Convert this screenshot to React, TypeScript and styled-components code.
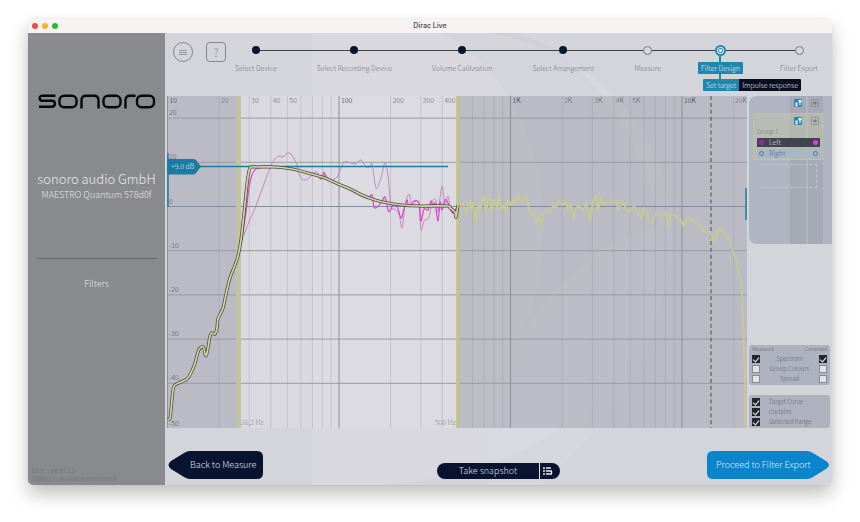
import React from 'react';
import styled, { createGlobalStyle, css } from 'styled-components';

const GlobalStyle = createGlobalStyle`
  * { box-sizing: border-box; }
  body {
    margin: 0;
    background: #fff;
    font-family: 'Noto Sans CJK SC', 'Open Sans', sans-serif;
    font-weight: 300;
  }
  button { font: inherit; border: 0; padding: 0; cursor: pointer; }
`;

type Point = [number, number];

const Page = styled.div`
  padding: 19px 28px 37px;
`;

const AppWindow = styled.div`
  border-radius: 5px;
  overflow: hidden;
  box-shadow: 0 9px 18px rgba(20, 20, 10, 0.27), 0 0 2px rgba(0, 0, 0, 0.1);
`;

const TitleBar = styled.header`
  display: grid;
  grid-template-columns: 1fr auto 1fr;
  align-items: center;
  height: 14px;
  padding: 0 4px;
  background: #f9f2f3;
`;

const Lights = styled.div`
  display: flex;
  gap: 4px;
`;

const Light = styled.span<{ $color: string }>`
  width: 6px;
  height: 6px;
  border-radius: 50%;
  background: ${(p) => p.$color};
`;

const Title = styled.h1`
  margin: 0;
  font: 600 7px/14px Inter, sans-serif;
  color: #5a5658;
`;

const Body = styled.div`
  display: grid;
  grid-template-columns: 137px minmax(0, 1fr);
`;

const Sidebar = styled.aside`
  display: flex;
  flex-direction: column;
  align-items: center;
  padding: 60px 4px 2px;
  background: #898a8d;
  color: #e6e6e9;
  text-align: center;
`;

const Logo = styled.svg`
  display: block;
  width: 118px;
  height: 17px;
`;

const Company = styled.h2`
  margin: 59px 0 0;
  font-size: 13px;
  line-height: 19px;
  font-weight: 300;
`;

const Product = styled.p`
  margin: 0;
  font-size: 9px;
  line-height: 14px;
`;

const Divider = styled.hr`
  width: 120px;
  margin: 56px 0 0;
  border: 0;
  border-top: 1px solid #66676b;
`;

const SidebarLink = styled.a`
  margin-top: 18px;
  font-size: 9px;
  line-height: 14px;
  color: inherit;
  text-decoration: none;
`;

const Version = styled.p`
  align-self: stretch;
  margin: auto 0 0;
  font-size: 6px;
  line-height: 8px;
  color: #6c6d70;
  text-align: left;
`;

const Main = styled.main`
  position: relative;
  display: flex;
  flex-direction: column;
  background: #d4d5db;
`;

const Backdrop = styled.svg`
  position: absolute;
  inset: 0;
  width: 100%;
  height: 100%;
`;

const Header = styled.div`
  position: relative;
  z-index: 1;
  display: flex;
  align-items: flex-start;
  height: 63px;
  padding: 9px 11px 0 8px;
`;

const ToolButtons = styled.div`
  display: flex;
  gap: 13px;
`;

const IconButton = styled.button<{ $round?: boolean }>`
  display: grid;
  place-items: center;
  width: 20px;
  height: 20px;
  border: 1px solid #85868c;
  border-radius: ${(p) => (p.$round ? '50%' : '4px')};
  background: transparent;
  color: #77787f;
  font-size: 11px;
  line-height: 18px;
  flex: none;
`;

const Steps = styled.ol`
  position: relative;
  display: flex;
  flex: 1;
  justify-content: space-between;
  margin: 0;
  padding: 4px 0 0 6px;
  list-style: none;
  &::before {
    content: '';
    position: absolute;
    top: 8px;
    left: 28px;
    right: 22px;
    height: 1px;
    background: #3c404a;
  }
`;

type StepState = 'done' | 'todo' | 'current';

const Step = styled.li`
  position: relative;
  display: flex;
  flex-direction: column;
  align-items: center;
`;

const Dot = styled.span<{ $state: StepState }>`
  width: 9px;
  height: 9px;
  border-radius: 50%;
  ${(p) =>
    p.$state === 'done' &&
    css`
      width: 8px;
      height: 8px;
      margin-bottom: 1px;
      background: #0b1628;
    `}
  ${(p) =>
    p.$state === 'todo' &&
    css`
      border: 1px solid #75777e;
      background: #d7d8dd;
    `}
  ${(p) =>
    p.$state === 'current' &&
    css`
      width: 11px;
      height: 11px;
      margin: -1px 0;
      border: 2px solid #1f86ae;
      background: radial-gradient(circle, #fff 1px, #1f86ae 2px, #e8f2f7 3px);
    `}
`;

const StepName = styled.button<{ $current?: boolean }>`
  margin-top: 7px;
  padding: 0 3px;
  border-radius: 1px;
  background: ${(p) => (p.$current ? '#1f86ae' : 'transparent')};
  color: ${(p) => (p.$current ? '#e8f3f8' : '#74757c')};
  font-size: 7px;
  line-height: 12px;
  white-space: nowrap;
`;

const Connector = styled.span`
  position: absolute;
  top: 10px;
  width: 2px;
  height: 24px;
  background: #1f86ae;
  z-index: -1;
`;

const SubMenu = styled.div`
  position: absolute;
  top: 33px;
  left: 5px;
  display: flex;
  border-radius: 1px;
  overflow: hidden;
`;

const SubItem = styled.button<{ $active?: boolean }>`
  padding: 0 3px;
  background: ${(p) => (p.$active ? '#1f86ae' : '#080e20')};
  color: #e3e8ee;
  font-size: 7px;
  line-height: 12px;
  white-space: nowrap;
`;

const Workspace = styled.div`
  position: relative;
  display: grid;
  grid-template-columns: minmax(0, 1fr) 83px;
  gap: 2px;
  padding-left: 2px;
`;

const Chart = styled.svg`
  display: block;
  width: 100%;
  height: auto;
`;

const Inspector = styled.div`
  display: flex;
  flex-direction: column;
`;

const Channels = styled.section`
  display: flex;
  flex-direction: column;
  gap: 4px;
  height: 148px;
  padding: 2px 9px 0 4px;
  border-radius: 7px 0 0 7px;
  background: linear-gradient(
    to right,
    #b0b5c1 41px,
    #a5aab4 41px 57px,
    #b0b5c1 57px 59px,
    #a5aab4 59px 74px,
    #b0b5c1 74px
  );
`;

const IconRow = styled.div<{ $inset?: boolean }>`
  display: flex;
  justify-content: flex-end;
  gap: 7px;
  height: 11px;
  padding-right: ${(p) => (p.$inset ? '3px' : '0')};
`;

const MiniButton = styled.button`
  display: grid;
  width: 10px;
  height: 10px;
  background: transparent;
`;

const Group = styled.div`
  padding: 2px 2px 1px 3px;
  background: #bdc4aa88;
  border: 1px solid #bdc3a4;
`;

const GroupName = styled.h3`
  margin: 0;
  font-size: 6px;
  line-height: 9px;
  font-weight: 300;
  color: #6c6f6b;
`;

const Channel = styled.button<{ $active?: boolean }>`
  display: grid;
  grid-template-columns: 6px 1fr 5px;
  gap: 4px;
  align-items: center;
  width: 100%;
  margin-top: 2px;
  padding: 0 2px;
  background: ${(p) => (p.$active ? '#404450' : '#aab6c4')};
  color: ${(p) => (p.$active ? '#dfe0e6' : '#4f6a97')};
  font-size: 7px;
  line-height: 9px;
  text-align: left;
`;

const Marker = styled.span<{ $fill?: string; $square?: boolean }>`
  width: 5px;
  height: 5px;
  border-radius: ${(p) => (p.$square ? '1px' : '50%')};
  background: ${(p) => p.$fill ?? 'transparent'};
  border: ${(p) => (p.$fill ? '0' : '1px solid #55719b')};
`;

const DropSlot = styled.div`
  width: 56px;
  height: 24px;
  align-self: flex-end;
  margin-right: 6px;
  border: 1px dashed #bfc4ce;
  border-left: 0;
`;

const Options = styled.section`
  display: grid;
  grid-template-columns: auto 1fr auto;
  align-content: start;
  align-items: center;
  row-gap: 2px;
  margin-right: 2px;
  padding: 0 3px 2px;
  border-radius: 3px;
  background: #adb2be;
  color: #5c606b;
  font-size: 6px;
  line-height: 8px;
`;

const SpectrumOptions = styled(Options)`
  margin-top: auto;
`;

const ViewOptions = styled(Options)`
  column-gap: 9px;
  margin-top: 10px;
  padding-top: 3px;
  padding-bottom: 2px;
`;

const OptionsHead = styled.div`
  grid-column: 1 / -1;
  display: flex;
  justify-content: space-between;
  font-size: 5px;
`;

const OptionLabel = styled.span`
  text-align: center;
`;

const ViewLabel = styled.label`
  grid-column: 2 / -1;
`;

const Check = styled.input`
  appearance: none;
  display: grid;
  place-items: center;
  width: 8px;
  height: 8px;
  margin: 0;
  border: 1px solid #878b95;
  background: #e2e3e8;
  &:checked {
    background: #22262f;
    border-color: #22262f;
  }
  &:checked::after {
    content: '';
    width: 3px;
    height: 5px;
    border: solid #f2f2f5;
    border-width: 0 1px 1px 0;
    transform: rotate(40deg);
  }
`;

const Footer = styled.footer`
  position: relative;
  display: grid;
  grid-template-columns: 1fr auto 1fr;
  align-items: end;
  padding: 23px 3px 6px;
`;

const NavButton = styled.button<{ $next?: boolean }>`
  position: relative;
  justify-self: ${(p) => (p.$next ? 'end' : 'start')};
  width: ${(p) => (p.$next ? '122px' : '95px')};
  height: 28px;
  padding: ${(p) => (p.$next ? '0 23px 0 9px' : '0 9px 0 22px')};
  background: transparent;
  color: #e2e8f0;
  font-size: 9px;
  line-height: 28px;
  white-space: nowrap;
`;

const NavShape = styled.svg`
  position: absolute;
  inset: 0;
  width: 100%;
  height: 100%;
`;

const NavText = styled.span`
  position: relative;
`;

const Snapshot = styled.div`
  display: flex;
  width: 123px;
  height: 16px;
  border-radius: 8px;
  overflow: hidden;
  background: #08142f;
`;

const SnapshotButton = styled.button`
  flex: 1;
  background: transparent;
  color: #dfe3ea;
  font-size: 9px;
  line-height: 16px;
`;

const SnapshotList = styled.button`
  display: grid;
  place-items: center;
  width: 21px;
  padding-right: 4px;
  background: transparent;
  border-left: 1px solid #dfe3ea;
`;

const steps: { name: string; state: StepState }[] = [
  { name: 'Select Device', state: 'done' },
  { name: 'Select Recording Device', state: 'done' },
  { name: 'Volume Calibration', state: 'done' },
  { name: 'Select Arrangement', state: 'done' },
  { name: 'Measure', state: 'todo' },
  { name: 'Filter Design', state: 'current' },
  { name: 'Filter Export', state: 'todo' },
];

/* Frequency axis: 10 Hz to 24 kHz on a log scale; level axis: 24 dB down to -50 dB. */
const xOf = (hz: number) => 167.5 + 171.5 * Math.log10(hz / 10);
const yOf = (db: number) => 206.5 - 4.42 * db;

const freqLabels: [number, string][] = [
  [10, '10'], [20, '20'], [30, '30'], [40, '40'], [50, '50'],
  [100, '100'], [200, '200'], [300, '300'], [400, '400'],
  [1000, '1K'], [2000, '2K'], [3000, '3K'], [4000, '4K'], [5000, '5K'],
  [10000, '10K'], [20000, '20K'],
];
const gridFreqs = [10, 100, 1000, 10000]
  .flatMap((d) => [1, 2, 3, 4, 5, 6, 7, 8, 9].map((n) => n * d))
  .filter((f) => f <= 20000);
const levels = [20, 10, 0, -10, -20, -30, -40, -50];

function smooth(points: Point[]): string {
  let d = `M${points[0][0]} ${points[0][1]}`;
  for (let i = 0; i < points.length - 1; i++) {
    const a = points[Math.max(i - 1, 0)];
    const b = points[i];
    const c = points[i + 1];
    const e = points[Math.min(i + 2, points.length - 1)];
    d += `C${b[0] + (c[0] - a[0]) / 6} ${b[1] + (c[1] - a[1]) / 6} ${c[0] - (e[0] - b[0]) / 6} ${c[1] - (e[1] - b[1]) / 6} ${c[0]} ${c[1]}`;
  }
  return d;
}

const target: Point[] = [
  [168, 420], [170, 418], [171, 410], [173, 390], [175, 385], [181, 382], [187, 379], [191, 373],
  [195, 363], [198, 352], [200, 348], [203, 347], [204, 349], [206, 356], [208, 348], [210, 336],
  [212, 333], [215, 334], [217, 328], [218, 319], [223, 308], [226, 294], [230, 278], [235, 265],
  [238, 256], [241, 240], [244, 213], [247, 184], [249, 171], [251, 167], [258, 167], [275, 167],
  [292, 169], [308, 173], [325, 178], [338, 184], [350, 189], [362, 195], [375, 200], [388, 203],
  [402, 205], [420, 206], [447, 206], [450, 208], [453, 210], [455, 212], [456, 217], [458, 205],
];

const measured: Point[] = [
  [242, 240], [249, 222], [257, 203], [270, 168], [275, 159], [279, 156], [283, 157], [288, 153],
  [292, 155], [297, 165], [300, 176], [304, 180], [309, 178], [313, 173], [317, 172], [321, 179],
  [325, 174], [330, 180], [337, 177], [341, 168], [344, 162], [348, 162], [355, 164], [361, 160],
  [366, 167], [370, 167], [372, 164], [375, 184], [377, 188], [381, 178], [385, 163], [388, 176],
  [391, 206], [394, 209], [399, 214], [402, 228], [405, 206], [409, 194], [412, 206], [416, 201],
  [419, 206], [421, 230], [424, 221], [429, 217], [432, 202], [436, 200], [438, 212], [442, 186],
  [445, 204], [448, 196], [450, 206], [453, 214],
];

const corrected: Point[] = [
  [242, 240], [246, 212], [249, 188], [251, 178], [254, 171], [259, 168], [275, 167], [290, 169],
  [308, 173], [317, 175], [321, 179], [324, 172], [326, 179], [330, 180], [338, 184], [350, 190],
  [366, 198], [372, 195], [374, 207], [377, 207], [381, 203], [385, 197], [388, 210], [390, 211],
  [393, 205], [397, 206], [401, 218], [404, 209], [407, 200], [409, 207], [414, 201], [419, 203],
  [421, 221], [424, 209], [428, 210], [431, 201], [433, 207], [435, 203], [438, 221], [440, 202],
  [442, 210], [445, 200], [448, 203], [451, 211], [454, 213], [457, 206],
];

const passive: Point[] = [
  [458, 204], [460, 207], [463, 203], [466, 214], [469, 201], [471, 209], [473, 203], [475, 223],
  [478, 204], [480, 210], [482, 203], [484, 196], [486, 211], [489, 195], [492, 213], [494, 200],
  [497, 207], [499, 197], [501, 209], [504, 205], [506, 214], [508, 199], [511, 205], [514, 198],
  [516, 204], [518, 194], [521, 203], [524, 196], [527, 197], [529, 210], [532, 215], [535, 213],
  [537, 222], [539, 217], [541, 226], [544, 213], [547, 210], [550, 212], [553, 206], [556, 207],
  [559, 200], [562, 205], [566, 201], [568, 210], [571, 204], [573, 218], [577, 207], [580, 206],
  [583, 211], [586, 203], [588, 211], [590, 222], [593, 201], [596, 196], [598, 211], [601, 196],
  [604, 205], [608, 202], [612, 203], [616, 200], [618, 210], [623, 201], [626, 209], [629, 213],
  [634, 206], [639, 215], [642, 218], [644, 208], [648, 218], [652, 224], [656, 213], [661, 216],
  [666, 212], [668, 226], [671, 214], [675, 216], [680, 219], [684, 226], [688, 218], [694, 221],
  [699, 226], [704, 231], [708, 233], [711, 235], [714, 242], [717, 234], [720, 227], [724, 233],
  [729, 240], [733, 251], [737, 263], [740, 278], [742, 295], [743, 320], [745, 375], [745, 428],
];

const jagged = 'M' + passive.map((p) => p.join(' ')).join('L');

function SonoroLogo() {
  return (
    <Logo viewBox="0 0 118 17" role="img" aria-label="sonoro" fill="none" stroke="#08080a" strokeWidth="2.4">
      <path d="M17.500 2.700H4.700q-3 0-3 2.600t3 2.500h9q3.200 0 3.200 2.900t-3.200 3.100H1" />
      <rect x="21.500" y="2.700" width="17" height="11.500" rx="4.500" />
      <path d="M43.500 15.500V7.200q0-4.500 4.500-4.500h8q4.500 0 4.500 4.500v8.300" />
      <rect x="65.500" y="2.700" width="17" height="11.500" rx="4.500" />
      <path d="M87.500 15.500V7.200q0-4.500 4.500-4.500h5.500" />
      <rect x="99" y="2.700" width="17" height="11.500" rx="4.500" />
    </Logo>
  );
}

function LayoutIcons({ inset }: { inset?: boolean }) {
  return (
    <IconRow $inset={inset}>
      <MiniButton aria-label="Show measured">
        <svg width="10" height="10" viewBox="0 0 10 10">
          <rect x="1" y="1" width="8" height="8" rx="1" fill="#2784b4" />
          <path d="M2.500 4.500h2v4h-2zM5.500 2h3v2.500h-1v3h-1v-3h-1z" fill="#f2f6f9" />
        </svg>
      </MiniButton>
      <MiniButton aria-label="Show corrected">
        <svg width="10" height="10" viewBox="0 0 10 10">
          <rect x="1.500" y="1.500" width="7" height="7" rx="1" fill="none" stroke="#8b8f98" />
          <path d="M3 5h4M5 3.500v3" stroke="#6a6e77" strokeWidth="1.200" />
        </svg>
      </MiniButton>
    </IconRow>
  );
}

function ResponseChart() {
  return (
    <Chart viewBox="167 96 580 332" role="img" aria-label="Frequency response">
      <rect x="241" y="96" width="216" height="332" fill="#dddee4" opacity=".5" />
      <rect x="167" y="96" width="70" height="332" fill="#a8a8b5" opacity=".58" />
      <rect x="459" y="96" width="288" height="332" fill="#a8a8b5" opacity=".58" />
      {gridFreqs.map((f) => {
        const major = [10, 100, 1000, 10000].includes(f);
        return (
          <line key={f} x1={xOf(f)} x2={xOf(f)} y1="96" y2="428" stroke={major ? '#8d8d97' : '#9090a0'} strokeOpacity={major ? 1 : 0.3} strokeWidth="1" />
        );
      })}
      {levels.slice(0, 7).map((l) => (
        <line key={l} x1="167" x2="747" y1={yOf(l)} y2={yOf(l)} stroke={l === 0 ? '#7990ac' : '#9a9aa4'} strokeWidth="1" />
      ))}
      <g fill="#4a4b54" fontSize="7">
        {freqLabels.map(([f, label]) => (
          <text key={label} x={f === 20000 ? 735 : xOf(f) + 2} y="103" fill={/^10/.test(label) || label === '1K' ? '#2c2d36' : '#63646d'}>
            {label}
          </text>
        ))}
        {levels.map((l) => (
          <text key={l} x="169" y={l === -50 ? 426 : yOf(l) - 3}>
            {l}
          </text>
        ))}
      </g>
      <rect x="236" y="96" width="5" height="332" fill="#c1c4a4" />
      <rect x="456" y="96" width="2" height="332" fill="#c7c982" />
      <rect x="458" y="96" width="2" height="332" fill="#bcc0a0" />
      <g fill="#85868d" fontSize="7">
        <text x="241" y="425">26,2 Hz</text>
        <text x="456" y="425" textAnchor="end">500 Hz</text>
      </g>
      <line x1="711" x2="711" y1="96" y2="428" stroke="#66665f" strokeWidth="1.300" strokeDasharray="4 2.900" />
      <path d={jagged} fill="none" stroke="#c6c896" strokeWidth="2" strokeLinejoin="round" />
      <path d={smooth(measured)} fill="none" stroke="#c486c2" strokeWidth="1" />
      <path d={smooth(corrected)} fill="none" stroke="#dc45c4" strokeWidth="1.200" />
      <line x1="200" x2="448" y1="166.500" y2="166.500" stroke="#1d7ba3" strokeWidth="1.500" />
      <path d={smooth(target)} fill="none" stroke="#4a4a3e" strokeWidth="3.200" />
      <path d={smooth(target)} fill="none" stroke="#d2d4a8" strokeWidth="1.700" />
      <line x1="168" x2="168" y1="153" y2="207" stroke="#1d7ba3" strokeWidth="1.500" />
      <line x1="746" x2="746" y1="188" y2="220" stroke="#1d7ba3" strokeWidth="1.500" />
      <path d="M167 159H193Q195 159 196 160L201 166.500L196 173Q195 174.500 193 174.500H167Z" fill="#1d7ba3" />
      <text x="171" y="169" fill="#e1edf3" fontSize="7">+9.0 dB</text>
    </Chart>
  );
}

const spectrumRows: [string, boolean][] = [
  ['Spectrum', true],
  ['Group Colours', false],
  ['Spread', false],
];

export default function App() {
  return (
    <>
      <GlobalStyle />
      <Page>
        <AppWindow>
          <TitleBar>
            <Lights>
              <Light $color="#f0493f" />
              <Light $color="#f6b22c" />
              <Light $color="#28b938" />
            </Lights>
            <Title>Dirac Live</Title>
          </TitleBar>
          <Body>
            <Sidebar>
              <SonoroLogo />
              <Company>sonoro audio GmbH</Company>
              <Product>MAESTRO Quantum 578d0f</Product>
              <Divider />
              <SidebarLink href="#filters">Filters</SidebarLink>
              <Version>
                Dirac Live v3.3.5
                <br />
                Signed in as oltan@avsensors.fi
              </Version>
            </Sidebar>
            <Main>
              <Backdrop viewBox="165 33 667 452" preserveAspectRatio="none" aria-hidden="true">
                <path d="M312 33H490C590 50 672 130 672 235C672 360 560 475 380 485H312Z" fill="#e2e3e9" opacity=".25" />
                <path d="M440 33C500 60 545 140 543 235C541 290 530 320 515 345C560 270 610 235 660 225C640 130 590 60 520 33Z" fill="#c3c4cd" opacity=".18" />
                <path d="M487 485V430C500 400 520 350 560 300C600 250 640 235 672 228C672 330 620 420 540 485Z" fill="#e2e3e9" opacity=".2" />
              </Backdrop>
              <Header>
                <ToolButtons>
                  <IconButton $round aria-label="Menu">
                    <svg width="8" height="7" viewBox="0 0 8 7" stroke="#85868d" strokeWidth=".8">
                      <path d="M0 1.500h8M0 3.500h8M0 5.500h8" />
                    </svg>
                  </IconButton>
                  <IconButton aria-label="Help">?</IconButton>
                </ToolButtons>
                <Steps>
                  {steps.map(({ name, state }) => (
                    <Step key={name}>
                      <Dot $state={state} />
                      {state === 'current' && <Connector />}
                      <StepName $current={state === 'current'}>{name}</StepName>
                      {state === 'current' && (
                        <SubMenu>
                          <SubItem $active>Set target</SubItem>
                          <SubItem>Impulse response</SubItem>
                        </SubMenu>
                      )}
                    </Step>
                  ))}
                </Steps>
              </Header>
              <Workspace>
                <ResponseChart />
                <Inspector>
                  <Channels>
                    <LayoutIcons inset />
                    <Group>
                      <LayoutIcons />
                      <GroupName>Group 1</GroupName>
                      <Channel $active>
                        <Marker $fill="#8f2f92" $square />
                        Left
                        <Marker $fill="#dd3fd0" />
                      </Channel>
                      <Channel>
                        <Marker />
                        Right
                        <Marker />
                      </Channel>
                    </Group>
                    <DropSlot />
                  </Channels>
                  <SpectrumOptions>
                    <OptionsHead>
                      <span>Measured</span>
                      <span>Corrected</span>
                    </OptionsHead>
                    {spectrumRows.map(([name, on]) => (
                      <React.Fragment key={name}>
                        <Check type="checkbox" defaultChecked={on} aria-label={`${name}, measured`} />
                        <OptionLabel>{name}</OptionLabel>
                        <Check type="checkbox" defaultChecked={on} aria-label={`${name}, corrected`} />
                      </React.Fragment>
                    ))}
                  </SpectrumOptions>
                  <ViewOptions>
                    {['Target Curve', 'Curtains', 'Detected Range'].map((name) => (
                      <React.Fragment key={name}>
                        <Check type="checkbox" defaultChecked id={name.replace(' ', '-')} />
                        <ViewLabel htmlFor={name.replace(' ', '-')}>{name}</ViewLabel>
                      </React.Fragment>
                    ))}
                  </ViewOptions>
                </Inspector>
              </Workspace>
              <Footer>
                <NavButton>
                  <NavShape viewBox="0 0 95 28" preserveAspectRatio="none" aria-hidden="true">
                    <path d="M22 0H89Q95 0 95 6V22Q95 28 89 28H22Q19 28 16 26L3 18Q-2 14 3 10L16 2Q19 0 22 0Z" fill="#08142f" />
                  </NavShape>
                  <NavText>Back to Measure</NavText>
                </NavButton>
                <Snapshot>
                  <SnapshotButton>Take snapshot</SnapshotButton>
                  <SnapshotList aria-label="Snapshots">
                    <svg width="10" height="8" viewBox="0 0 10 8" stroke="#e5e9ef" strokeWidth="1.400">
                      <path d="M0 1h2M3 1h5M0 4h2M3 4h6M0 7h2M3 7h6M8.500 4v3" />
                    </svg>
                  </SnapshotList>
                </Snapshot>
                <NavButton $next>
                  <NavShape viewBox="0 0 122 28" preserveAspectRatio="none" aria-hidden="true">
                    <path d="M6 0H100Q103 0 106 2L119 10Q125 14 119 18L106 26Q103 28 100 28H6Q0 28 0 22V6Q0 0 6 0Z" fill="#0a85cb" />
                  </NavShape>
                  <NavText>Proceed to Filter Export</NavText>
                </NavButton>
              </Footer>
            </Main>
          </Body>
        </AppWindow>
      </Page>
    </>
  );
}
